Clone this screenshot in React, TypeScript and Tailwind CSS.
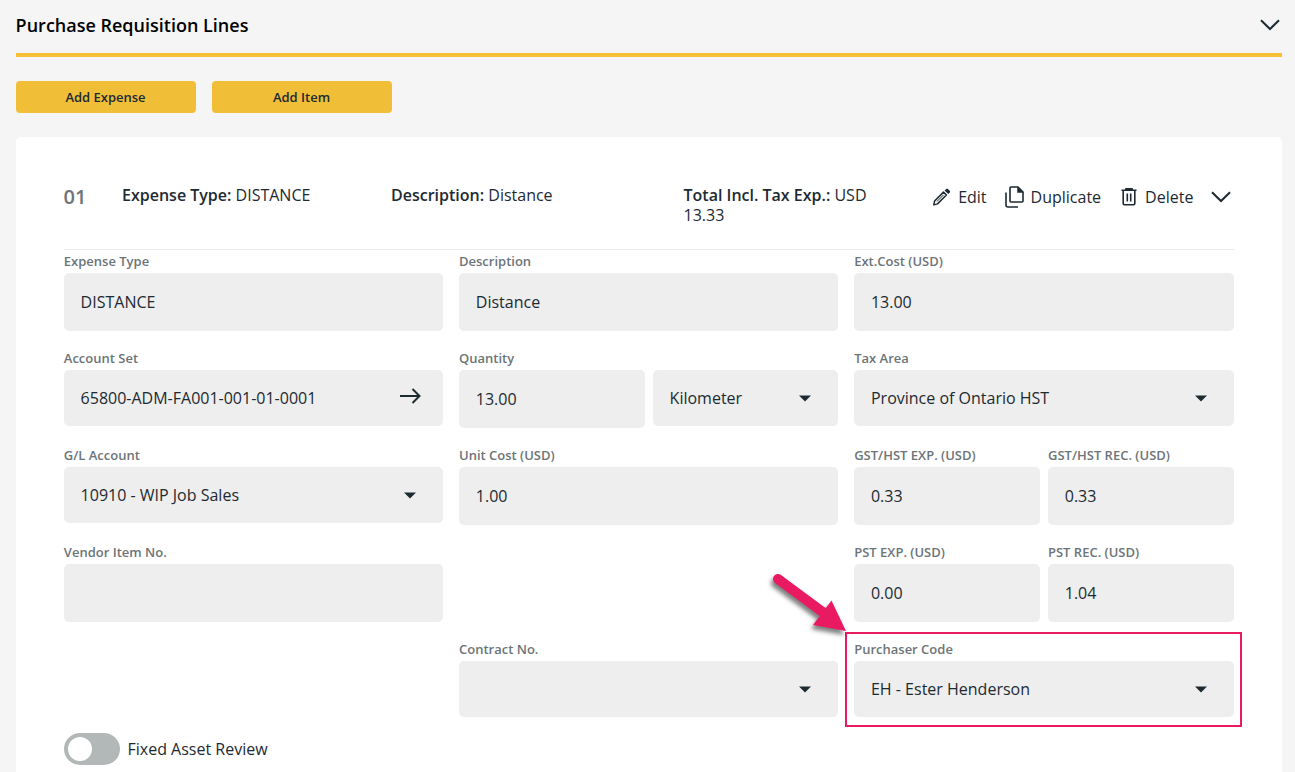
import type { ReactNode } from "react";

const semi = "font-['Open_Sans',sans-serif] font-semibold";

function Chevron() {
  return (
    <svg width="20" height="12" viewBox="0 0 20 12" fill="none" stroke="#1d2a32" strokeWidth="2" className="block shrink-0">
      <path d="M1 1.2 10 10 19 1.2" />
    </svg>
  );
}

function Caret() {
  return (
    <svg width="12" height="7" viewBox="0 0 12 7" fill="#1d2a32" className="mr-[27px] block shrink-0">
      <path d="M0 .4h12L6 6.6z" />
    </svg>
  );
}

function Arrow() {
  return (
    <svg width="21" height="16" viewBox="0 0 21 16" fill="none" stroke="#1d2a32" strokeWidth="2" className="mr-[22px] mb-1 block shrink-0">
      <path d="M0 8h19.5M12.5 1l7 7-7 7" />
    </svg>
  );
}

function Label({ children }: { children?: ReactNode }) {
  return <div className={`${semi} -ml-[0.2px] h-[23px] whitespace-nowrap text-[13px] leading-[23px] text-[#6c7478]`}>{children}</div>;
}

type FieldProps = { label?: string; value?: string; kind?: "text" | "select" | "link" };

function Field({ label, value, kind = "text" }: FieldProps) {
  return (
    <div className="min-w-0">
      <Label>{label}</Label>
      <div className={`flex items-center justify-between rounded-[5px] bg-[#eeeeee] pl-[16.6px] ${kind === "text" ? "h-[58px]" : "h-14"}`}>
        <span className="whitespace-nowrap">{value}</span>
        {kind === "select" && <Caret />}
        {kind === "link" && <Arrow />}
      </div>
    </div>
  );
}

function Pair({ children }: { children: ReactNode }) {
  return <div className="grid grid-cols-[185.8px_1fr] gap-2">{children}</div>;
}

function Strong({ children }: { children: ReactNode }) {
  return <b className={semi}>{children}</b>;
}

export default function App() {
  return (
    <div className="h-[772px] overflow-hidden bg-[#f5f5f5] pl-4 pr-[13px] font-['Open_Sans',sans-serif] text-base text-[#1d2a32]">
      <header className="flex h-[57px] items-center justify-between border-b-4 border-[#f8c135] pb-[3px] pr-[2px]">
        <h1 className={`${semi} -ml-[0.4px] text-[18px] text-black`}>Purchase Requisition Lines</h1>
        <Chevron />
      </header>
      <div className={`${semi} flex gap-4 pt-6 text-[13px]`}>
        <button className="h-8 w-[180px] rounded-[4px] bg-[#f1be38] pr-px pt-px">Add Expense</button>
        <button className="h-8 w-[180px] rounded-[4px] bg-[#f1be38] pr-px pt-px">Add Item</button>
      </div>
      <main className="mt-6 h-[660px] rounded-[5px] bg-white px-12 pt-12">
        <div className="flex h-[65px] border-b border-[#ebebeb] leading-5">
          <div className={`${semi} w-[58px] pt-[2px] text-[20px] text-[#6c7478]`}><span className="-ml-[0.4px]">01</span></div>
          <div className="w-[269px]"><Strong>Expense Type:</Strong> DISTANCE</div>
          <div className="w-[292.5px]"><Strong>Description:</Strong> Distance</div>
          <div className="w-[200px]"><Strong>Total Incl. Tax Exp.:</Strong> USD<br />13.33</div>
          <div className="ml-auto flex h-6 items-center pr-[3px]">
            <svg width="20" height="20" viewBox="0 0 20 20" fill="none" stroke="#1d2a32" strokeWidth="1.5" className="mr-1.5">
              <path d="m2.6 14 8.9-8.9 2.9 2.9-8.9 8.9-3.7 1z" strokeLinejoin="round" />
              <path d="m5 14.4 6.5-6.5" strokeWidth="1" />
              <path d="m12.6 3.4 1.6-1.5q.8-.8 1.7 0l1.9 1.9q.8.8 0 1.6l-1.6 1.6z" fill="#1d2a32" stroke="none" />
            </svg>
            <span>Edit</span>
            <svg width="20" height="22" viewBox="0 0 20 22" fill="none" stroke="#1d2a32" strokeWidth="1.6" className="ml-[18px] mr-1.5">
              <path d="M6 1h7l5 5v9q0 1-1 1H6q-1 0-1-1V2q0-1 1-1z" />
              <path d="M12.5 1v5.5H18z" fill="#1d2a32" strokeWidth=".5" />
              <path d="M1 6.5V19q0 2 2 2h10" />
            </svg>
            <span>Duplicate</span>
            <svg width="16" height="18" viewBox="0 0 16 18" fill="none" stroke="#1d2a32" strokeWidth="1.6" className="ml-5 mr-2">
              <path d="M.5 2.3h15M5 2V.8h6V2M2.2 3v12.5q0 1.2 1.2 1.2h9.2q1.2 0 1.2-1.2V3M6.3 5.5v8M9.7 5.5v8" />
            </svg>
            <span className="mr-[17.6px]">Delete</span>
            <Chevron />
          </div>
        </div>
        <div className="grid grid-cols-[379.2px_379.2px_1fr] gap-x-4 auto-rows-[97px]">
          <Field label="Expense Type" value="DISTANCE" />
          <Field label="Description" value="Distance" />
          <Field label="Ext.Cost (USD)" value="13.00" />

          <Field label="Account Set" value="65800-ADM-FA001-001-01-0001" kind="link" />
          <Pair>
            <Field label="Quantity" value="13.00" />
            <Field value="Kilometer" kind="select" />
          </Pair>
          <Field label="Tax Area" value="Province of Ontario HST" kind="select" />

          <Field label="G/L Account" value="10910 - WIP Job Sales" kind="select" />
          <Field label="Unit Cost (USD)" value="1.00" />
          <Pair>
            <Field label="GST/HST EXP. (USD)" value="0.33" />
            <Field label="GST/HST REC. (USD)" value="0.33" />
          </Pair>

          <Field label="Vendor Item No." />
          <div />
          <Pair>
            <Field label="PST EXP. (USD)" value="0.00" />
            <Field label="PST REC. (USD)" value="1.04" />
          </Pair>

          <div />
          <Field label="Contract No." kind="select" />
          <div className="relative">
            <Field label="Purchaser Code" value="EH - Ester Henderson" kind="select" />
            <div className="pointer-events-none absolute -left-[9.4px] -top-[6px] h-[95px] w-[397px] border-2 border-[#e91a62]" />
            <svg width="90" height="76" viewBox="0 0 90 76" className="pointer-events-none absolute -left-[88.4px] -top-[71px] overflow-visible drop-shadow-[-2px_4px_2px_rgba(0,0,0,0.5)]">
              <path d="M12 12 58 46" stroke="#e91a62" strokeWidth="10" strokeLinecap="round" />
              <path d="M65.5 33.5 80 64 47 58z" fill="#e91a62" />
            </svg>
          </div>
        </div>
        <div className="-mt-[2px] flex items-center gap-[7.5px]">
          <div className="h-8 w-14 rounded-full bg-[#b2b7b8] p-1"><div className="h-6 w-6 rounded-full bg-white" /></div>
          <span>Fixed Asset Review</span>
        </div>
      </main>
    </div>
  );
}
